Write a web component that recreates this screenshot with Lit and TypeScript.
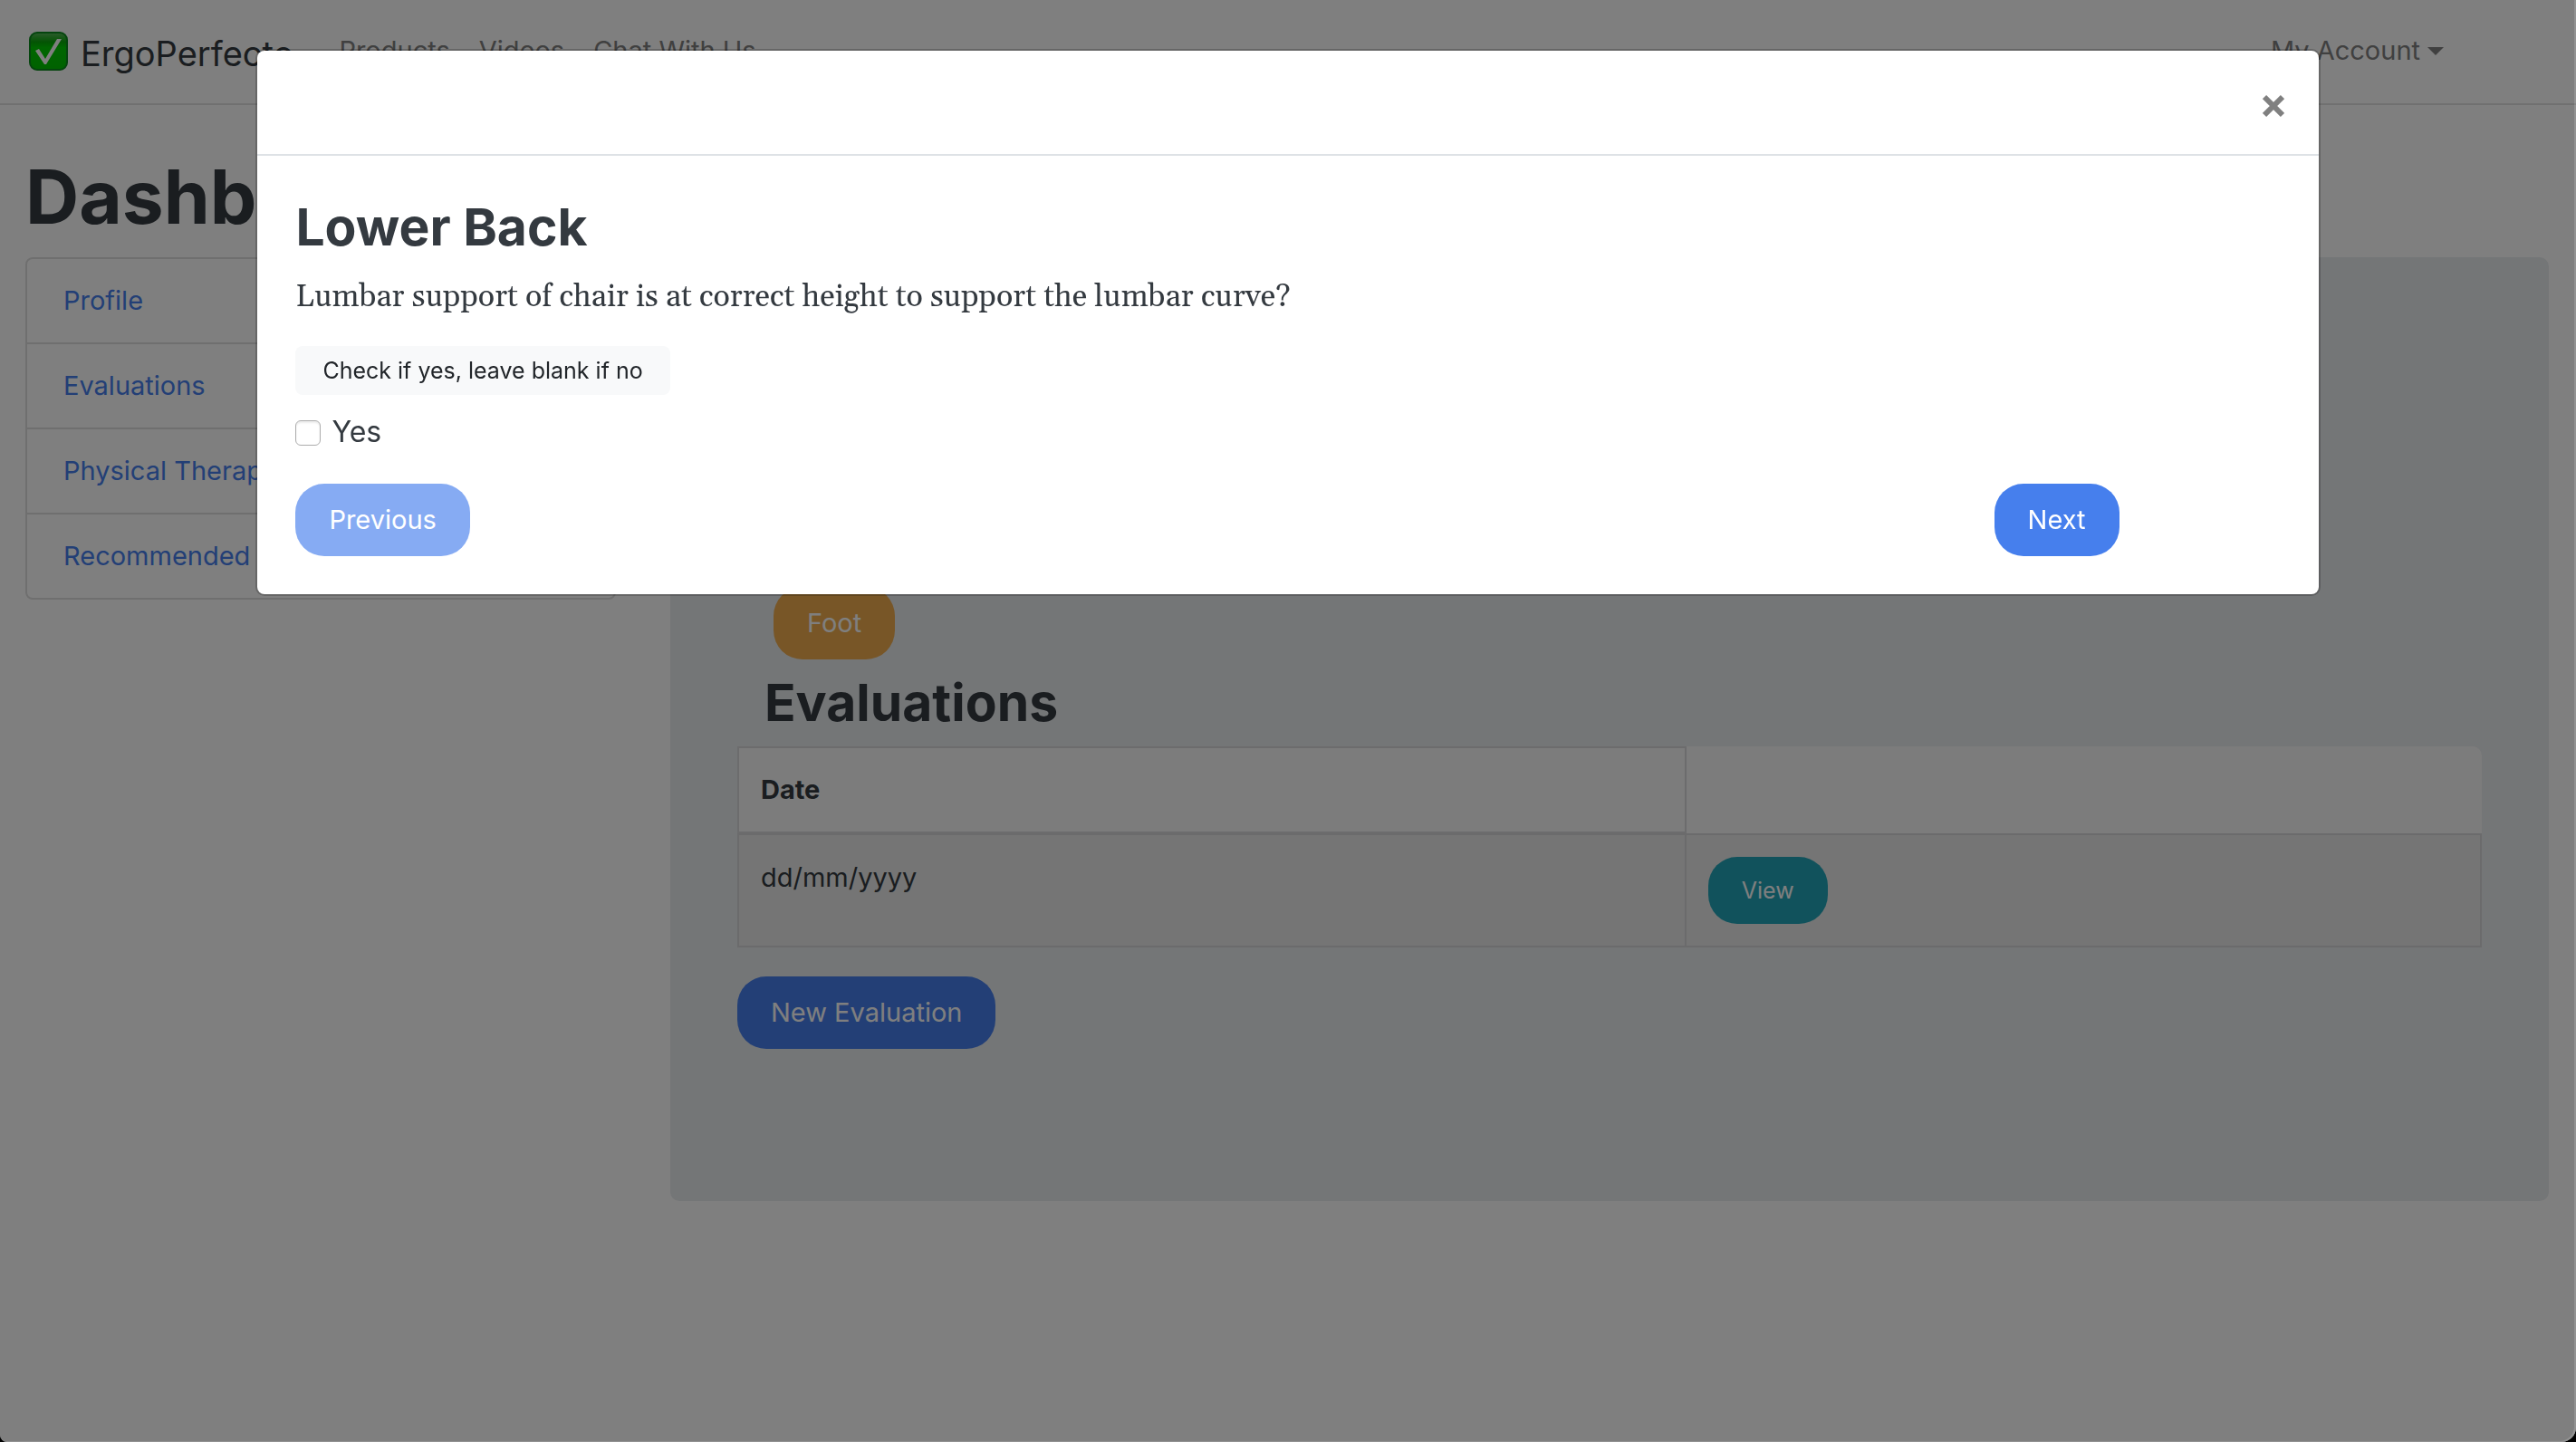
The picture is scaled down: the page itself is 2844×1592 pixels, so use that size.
import { LitElement, html, css } from "lit";
import { customElement, state } from "lit/decorators.js";

@customElement("app-root")
export class AppRoot extends LitElement {
  @state() private answer = false;

  static styles = css`
    :host {
      display: block;
      font-family: Inter, "Liberation Sans", sans-serif;
      font-size: 29px;
      line-height: 46px;
      color: #343a40;
      background: #000;
    }
    * {
      box-sizing: border-box;
    }
    h1,
    h2,
    p,
    ul {
      margin: 0;
      padding: 0;
    }
    a {
      color: #467fed;
      text-decoration: none;
    }
    button {
      font: inherit;
      border: 0;
      cursor: pointer;
    }
    .page {
      min-height: 100vh;
      border-radius: 0 0 16px 8px;
      background: #fff;
      overflow: hidden;
    }
    .navbar {
      display: flex;
      align-items: center;
      height: 116px;
      padding: 0 146px 2px 32px;
      border-bottom: 2px solid #e0e0e0;
    }
    .brand {
      display: flex;
      align-items: center;
      gap: 14px;
      margin-right: 50px;
      font-size: 38px;
      color: #343a40;
    }
    .brand-name {
      padding-top: 6px;
    }
    .tick {
      display: block;
      width: 43px;
      height: 43px;
    }
    .links {
      display: flex;
      flex: 1;
      gap: 32px;
      list-style: none;
    }
    .links a,
    .account {
      color: #808080;
    }
    .account {
      display: flex;
      align-items: center;
      gap: 8px;
      padding: 0;
      background: none;
    }
    .caret {
      border: 9px solid transparent;
      border-top-color: currentColor;
      border-bottom: 0;
    }
    .title {
      padding: 54px 28px 18px;
      font-size: 82px;
      line-height: 96px;
      font-weight: 700;
    }
    .columns {
      display: grid;
      grid-template-columns: 652px 1fr;
      gap: 60px;
      align-items: start;
      padding: 0 30px 0 28px;
    }
    .menu {
      list-style: none;
      border: 2px solid #dfdfdf;
      border-radius: 8px;
    }
    .menu li + li {
      border-top: 2px solid #dfdfdf;
    }
    .menu a {
      display: block;
      padding: 23px 40px;
    }
    .panel {
      min-height: 1042px;
      padding: 364px 74px 0;
      border-radius: 10px;
      background: #e9ecef;
    }
    .btn {
      display: block;
      height: 80px;
      padding: 0 37px;
      border-radius: 32px;
      color: #fff;
      background: #467fed;
    }
    .btn:disabled {
      opacity: 0.65;
    }
    .foot {
      margin-left: 40px;
      background: #f0ad4e;
    }
    .heading {
      padding: 18px 30px 0;
      font-size: 57px;
      line-height: 60px;
      font-weight: 700;
    }
    .table {
      width: 100%;
      margin: 18px 0 32px;
      border-collapse: separate;
      border-spacing: 0;
      table-layout: fixed;
    }
    .table th {
      width: 54.4%;
      padding: 23px 24px;
      border: 2px solid #d8d9da;
      text-align: left;
      background: #f8f8f8;
    }
    .table td {
      padding: 24px;
      border: solid #d6d7d8;
      border-width: 2px 2px 2px 0;
      vertical-align: top;
      background: #eaeaea;
    }
    .table td:first-child {
      border-left-width: 2px;
    }
    .table .blank {
      border: 0;
      border-radius: 0 10px 0 0;
      background: #f8f8f8;
    }
    .view {
      height: 74px;
      font-size: 25px;
      background: #22a5b8;
    }
    .backdrop {
      position: fixed;
      inset: 0;
      border-radius: 0 0 16px 8px;
      background: rgba(0, 0, 0, 0.5);
      box-shadow: inset -2px -1px rgba(255, 255, 255, 0.15);
    }
    .modal {
      position: fixed;
      top: 56px;
      left: 10%;
      right: 10%;
      border-radius: 8px;
      background: #fff;
      box-shadow: 0 0 0 2px rgba(0, 0, 0, 0.2);
    }
    .modal-head {
      display: flex;
      align-items: center;
      justify-content: flex-end;
      height: 116px;
      padding: 8px 34px 0;
      border-bottom: 2px solid #dee2e6;
    }
    .close {
      display: flex;
      padding: 4px;
      background: none;
    }
    .modal-body {
      padding: 46px 42px 42px;
    }
    .modal-title {
      font-size: 57px;
      line-height: 66px;
      font-weight: 700;
    }
    .question {
      padding: 18px 0 12px;
      font-family: Gelasio, Georgia, "Liberation Serif", serif;
      font-size: 34px;
      line-height: 52px;
    }
    .hint {
      display: block;
      height: 54px;
      margin-top: 16px;
      padding: 0 30px;
      border-radius: 8px;
      font-size: 25px;
      color: #212529;
      background: #f8f9fa;
    }
    .check {
      display: flex;
      align-items: center;
      gap: 12px;
      width: max-content;
      margin: 14px 0 30px;
      font-size: 32px;
      line-height: 54px;
    }
    .check input {
      appearance: none;
      width: 28px;
      height: 28px;
      margin: 2px 0 0;
      border: 1px solid #adadad;
      border-radius: 6px;
      background: #fff;
      box-shadow: inset 0 2px 2px #ececec;
    }
    .check input:checked {
      background: #467fed;
    }
    .actions {
      display: flex;
      justify-content: space-between;
      padding-right: 178px;
    }
  `;

  private readonly links = ["Products", "Videos", "Chat With Us"];
  private readonly sections = ["Profile", "Evaluations", "Physical Therapy", "Recommended Products"];

  render() {
    return html`
      <div class="page">
        <nav class="navbar">
          <a class="brand" href="#">
            <svg class="tick" viewBox="0 0 43 43" aria-hidden="true">
              <defs>
                <linearGradient id="face" x1="0" y1="0" x2="0" y2="1">
                  <stop offset="0" stop-color="#5cb85c" />
                  <stop offset="0.25" stop-color="#08a808" />
                  <stop offset="0.4" stop-color="#00cc00" />
                  <stop offset="1" stop-color="#00c400" />
                </linearGradient>
              </defs>
              <rect x="1" y="1" width="41" height="41" rx="8" fill="url(#face)" stroke="#0a8a1c" stroke-width="2" />
              <path d="M7 21 L11 19 L18 30 L31 8 L36 8 L19 36 L17 36 Z" fill="#fff" />
            </svg>
            <span class="brand-name">ErgoPerfecto</span>
          </a>
          <ul class="links">
            ${this.links.map((l) => html`<li><a href="#">${l}</a></li>`)}
          </ul>
          <button class="account">My Account<span class="caret"></span></button>
        </nav>
        <h1 class="title">Dashboard</h1>
        <div class="columns">
          <ul class="menu">
            ${this.sections.map((s) => html`<li><a href="#">${s}</a></li>`)}
          </ul>
          <main class="panel">
            <button class="btn foot">Foot</button>
            <h2 class="heading">Evaluations</h2>
            <table class="table">
              <thead>
                <tr><th>Date</th><td class="blank"></td></tr>
              </thead>
              <tbody>
                <tr>
                  <td>dd/mm/yyyy</td>
                  <td><button class="btn view">View</button></td>
                </tr>
              </tbody>
            </table>
            <button class="btn">New Evaluation</button>
          </main>
        </div>
      </div>
      <div class="backdrop"></div>
      <section class="modal" role="dialog" aria-labelledby="modal-title">
        <header class="modal-head">
          <button class="close" aria-label="Close">
            <svg width="24" height="26" viewBox="0 0 24 26" aria-hidden="true">
              <path d="M2 3 L22 23 M22 3 L2 23" stroke="#808080" stroke-width="6" />
            </svg>
          </button>
        </header>
        <div class="modal-body">
          <h2 class="modal-title" id="modal-title">Lower Back</h2>
          <p class="question">Lumbar support of chair is at correct height to support the lumbar curve?</p>
          <button class="hint">Check if yes, leave blank if no</button>
          <label class="check">
            <input
              type="checkbox"
              .checked=${this.answer}
              @change=${(e: Event) => (this.answer = (e.target as HTMLInputElement).checked)}
            />
            Yes
          </label>
          <div class="actions">
            <button class="btn" disabled>Previous</button>
            <button class="btn">Next</button>
          </div>
        </div>
      </section>
    `;
  }
}
